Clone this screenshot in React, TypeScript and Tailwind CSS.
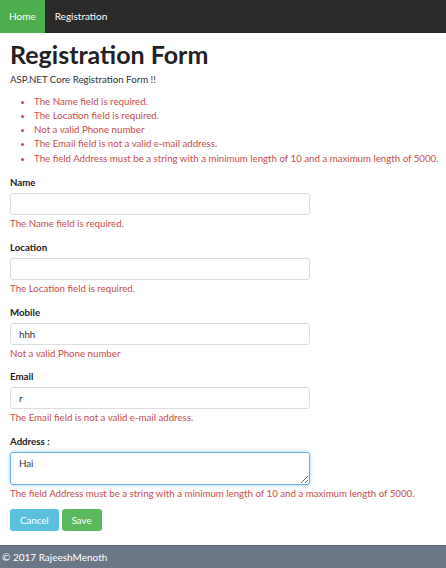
const ERRORS = [
  "The Name field is required.",
  "The Location field is required.",
  "Not a valid Phone number",
  "The Email field is not a valid e-mail address.",
  "The field Address must be a string with a minimum length of 10 and a maximum length of 5000.",
];

const FIELDS = [
  { label: "Name", value: "", error: "The Name field is required." },
  { label: "Location", value: "", error: "The Location field is required." },
  { label: "Mobile", value: "hhh", error: "Not a valid Phone number" },
  { label: "Email", value: "r", error: "The Email field is not a valid e-mail address." },
];

export default function App() {
  return (
    <div className="flex h-[568px] flex-col overflow-hidden bg-white font-['Lato','Liberation_Sans',sans-serif] text-[#333]">
      <nav className="flex h-[33px] shrink-0 items-stretch bg-[#2a2a2a] text-[10px] text-white">
        <a className="flex items-center bg-[#4cae4c] px-[9px]">Home</a>
        <a className="flex items-center px-[10px]">Registration</a>
      </nav>

      <main className="flex-1 pl-[10px] pr-[2px]">
        <h1 className="mt-[5px] text-[25px] leading-[32px] font-bold text-[#222]">Registration Form</h1>
        <p className="mt-[2px] text-[9.7px]">ASP.NET Core Registration Form !!</p>

        <ul className="mt-[7px] list-disc pl-[24px] text-[9.7px] leading-[14.3px] text-[#c94c4c] marker:text-[#c94c4c]">
          {ERRORS.map((e) => (
            <li key={e}>{e}</li>
          ))}
        </ul>

        <form className="mt-[10px]">
          {FIELDS.map((f) => (
            <div key={f.label} className="mb-[9.8px]">
              <label className="block text-[9.7px] font-bold leading-[14px] text-[#222]">{f.label}</label>
              <input
                readOnly
                value={f.value}
                className="mt-[4px] block h-[22px] w-[300px] rounded-[3px] border border-[#ddd] px-[8px] text-[9.7px] outline-none"
              />
              <p className="mt-[1px] text-[9.7px] leading-[14px] text-[#c94c4c]">{f.error}</p>
            </div>
          ))}
          <div>
            <label className="block text-[9.7px] font-bold leading-[14px] text-[#222]">Address :</label>
            <textarea
              readOnly
              value="Hai"
              className="mt-[4px] block h-[33px] w-[300px] rounded-[3px] border border-[#66afe9] px-[8px] py-[3px] text-[9.7px] outline-none shadow-[0_0_4px_rgba(102,175,233,0.6)]"
            />
            <p className="mt-[1px] text-[9.7px] leading-[14px] text-[#c94c4c]">
              The field Address must be a string with a minimum length of 10 and a maximum length of 5000.
            </p>
          </div>
          <div className="mt-[9px] flex gap-[3px]">
            <button type="button" className="h-[22px] rounded-[3px] bg-[#5bc0de] px-[10px] text-[9.7px] text-white">
              Cancel
            </button>
            <button type="button" className="h-[22px] rounded-[3px] bg-[#5cb85c] px-[10px] text-[9.7px] text-white">
              Save
            </button>
          </div>
        </form>
      </main>

      <footer className="flex h-[23px] shrink-0 items-center border-t border-[#5a6573] bg-[#6b7787] px-[2px] text-[10px] text-white">
        © 2017 RajeeshMenoth
      </footer>
    </div>
  );
}
